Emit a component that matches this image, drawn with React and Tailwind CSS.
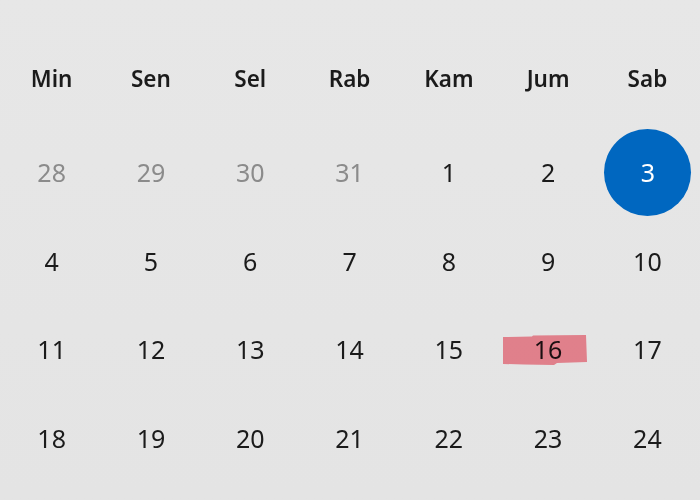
import React from "react";

const days = ["Min", "Sen", "Sel", "Rab", "Kam", "Jum", "Sab"];

const weeks = [
  [28, 29, 30, 31, 1, 2, 3],
  [4, 5, 6, 7, 8, 9, 10],
  [11, 12, 13, 14, 15, 16, 17],
  [18, 19, 20, 21, 22, 23, 24],
];

function Marker() {
  // hand-drawn highlighter stroke
  return (
    <svg
      className="absolute left-[-3px] top-[-1px] mix-blend-multiply pointer-events-none"
      width="86"
      height="32"
      viewBox="0 0 86 32"
    >
      <path
        d="M1 3 L30 2.5 L31 1.5 L84 1 L85 28 L55 29 L52 31 L22 30.5 L1 30 Z"
        fill="#fa8e9b"
      />
    </svg>
  );
}

function DayCell({ value, muted, selected, marked }) {
  if (selected) {
    return (
      <div className="flex items-center justify-center">
        <div className="w-[87px] h-[87px] rounded-full bg-[#0067c0] flex items-center justify-center text-white text-[25px] ml-[1px]">
          {value}
        </div>
      </div>
    );
  }
  return (
    <div className="flex items-center justify-center">
      <div className="relative w-[87px] h-[30px] flex items-center justify-center">
        <span className={muted ? "text-[#8b8b8b]" : "text-[#1b1b1b]"}>
          {value}
        </span>
        {marked && <Marker />}
      </div>
    </div>
  );
}

export default function App() {
  return (
    <div
      className="w-[700px] h-[500px] overflow-hidden bg-gradient-to-b from-[#e7e7e7] to-[#e4e4e4] pl-[2px]"
      style={{ fontFamily: '"Noto Sans", "Open Sans", sans-serif' }}
    >
      <div className="grid grid-cols-[repeat(7,99.3px)] pt-[62px] h-[34px] box-content">
        {days.map((d) => (
          <div
            key={d}
            className="text-center text-[22.5px] font-semibold text-[#1b1b1b] leading-[34px]"
          >
            {d}
          </div>
        ))}
      </div>
      <div className="grid grid-cols-[repeat(7,99.3px)] grid-rows-[repeat(4,88.7px)] mt-[32px] text-[25px] leading-none">
        {weeks.map((w, wi) =>
          w.map((v, di) => (
            <DayCell
              key={`${wi}-${di}`}
              value={v}
              muted={wi === 0 && di < 4}
              selected={wi === 0 && di === 6}
              marked={wi === 2 && di === 5}
            />
          ))
        )}
      </div>
    </div>
  );
}
